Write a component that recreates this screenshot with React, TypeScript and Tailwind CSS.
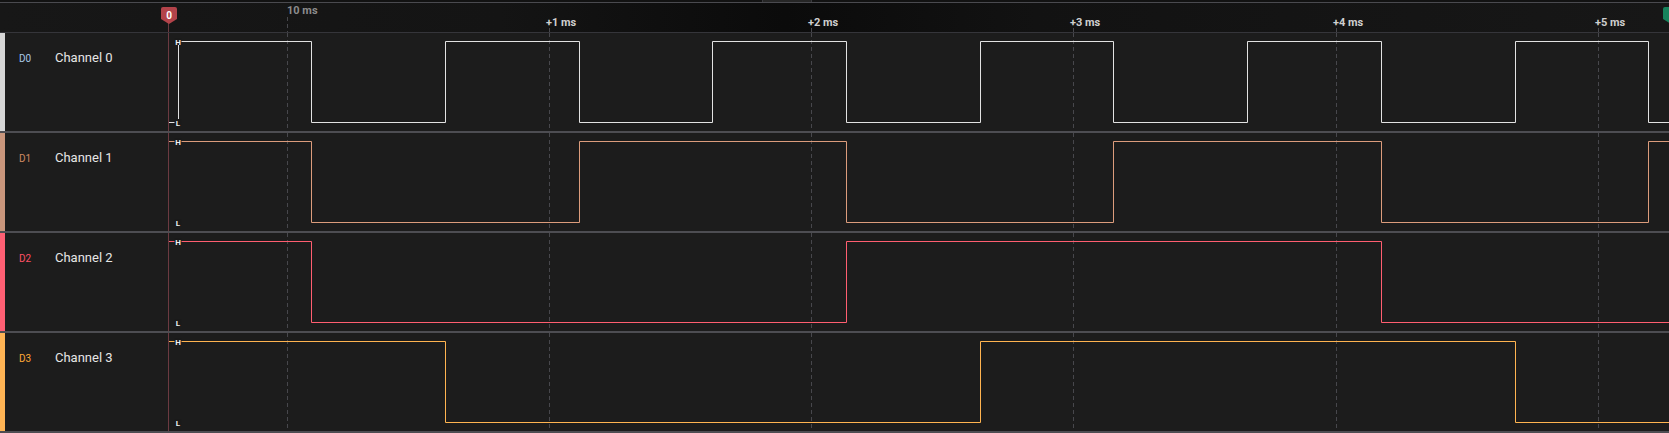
import React from "react";

const GRID = [287, 549, 811, 1073, 1336, 1598];
const PANEL = 168;
const W = 1669 - PANEL;
const H_Y = 8.5;
const L_Y = 89.5;

type Ch = {
  id: string;
  name: string;
  bar: string;
  label: string;
  wave: string;
  initHigh: boolean;
  trans: number[];
};

const range = (start: number, step: number, n: number) =>
  Array.from({ length: n }, (_, k) => start + k * step);

const CHANNELS: Ch[] = [
  {
    id: "D0",
    name: "Channel 0",
    bar: "bg-[#d6d6d6]",
    label: "text-[#a9c9e6]",
    wave: "#e2e2e2",
    initHigh: false,
    trans: range(177.5, 133.7, 12),
  },
  {
    id: "D1",
    name: "Channel 1",
    bar: "bg-[#c9967c]",
    label: "text-[#d08a62]",
    wave: "#dc9c7c",
    initHigh: true,
    trans: range(311.2, 267.4, 6),
  },
  {
    id: "D2",
    name: "Channel 2",
    bar: "bg-[#ff5f73]",
    label: "text-[#ff5064]",
    wave: "#ff5e70",
    initHigh: true,
    trans: [311.2, 846, 1380.8],
  },
  {
    id: "D3",
    name: "Channel 3",
    bar: "bg-[#ffb454]",
    label: "text-[#ffa836]",
    wave: "#ffb450",
    initHigh: true,
    trans: [444.9, 979.7, 1514.5],
  },
];

const sx = (page: number) => Math.round(page - PANEL) + 0.5;

function wavePath(initHigh: boolean, trans: number[]) {
  let high = initHigh;
  let d = `M 1 ${high ? H_Y : L_Y}`;
  for (const t of trans) {
    const x = sx(t);
    high = !high;
    d += ` H ${x} V ${high ? H_Y : L_Y}`;
  }
  d += ` H ${W}`;
  return d;
}

function LevelTag({ y, text }: { y: number; text: string }) {
  return (
    <g>
      <rect x={6.5} y={y - 3.5} width={7} height={7} fill="#1a1a1a" />
      <text
        x={10}
        y={y + 3}
        textAnchor="middle"
        fontSize="8"
        fontWeight="700"
        fill="#f2f2f2"
        fontFamily="Roboto, 'Liberation Sans', sans-serif"
      >
        {text}
      </text>
    </g>
  );
}

function Row({ ch }: { ch: Ch }) {
  return (
    <div className="flex h-[100px] border-b-2 border-[#4d4d52] bg-[#1c1c1c]">
      <div className="flex w-[168px] shrink-0">
        <div className={`w-[5px] shrink-0 ${ch.bar}`} />
        <div className="flex items-baseline pl-[14px] pt-[18px]">
          <span className={`w-[36px] text-[10px] leading-none ${ch.label}`}>{ch.id}</span>
          <span className="text-[13px] leading-none text-[#e6e6e6]">{ch.name}</span>
        </div>
      </div>
      <svg width={W} height={98} className="block shrink-0">
        {GRID.map((g) => (
          <line
            key={g}
            x1={sx(g)}
            x2={sx(g)}
            y1={0}
            y2={98}
            stroke="#47474c"
            strokeWidth={1}
            strokeDasharray="4 3"
          />
        ))}
        <line x1={0.5} x2={0.5} y1={0} y2={98} stroke="#6b3a41" strokeWidth={1} />
        <path d={wavePath(ch.initHigh, ch.trans)} fill="none" stroke={ch.wave} strokeWidth={1} />
        <LevelTag y={H_Y} text="H" />
        <LevelTag y={L_Y} text="L" />
      </svg>
    </div>
  );
}

function Marker({ color, text, left }: { color: string; text: string; left: number }) {
  return (
    <svg
      width={16}
      height={17}
      className="absolute top-[4px]"
      style={{ left }}
    >
      <path d="M 2 0 H 14 Q 16 0 16 2 V 12 L 8 17 L 0 12 V 2 Q 0 0 2 0 Z" fill={color} />
      {text && (
        <text
          x={8}
          y={11.5}
          textAnchor="middle"
          fontSize="10"
          fontWeight="700"
          fill="#ffffff"
          fontFamily="Roboto, 'Liberation Sans', sans-serif"
        >
          {text}
        </text>
      )}
    </svg>
  );
}

export default function App() {
  return (
    <div
      className="w-[1669px] h-[433px] overflow-hidden bg-[#1c1c1c]"
      style={{ fontFamily: "Roboto, 'Liberation Sans', sans-serif" }}
    >
      <div className="flex h-[2px] bg-[#121212]">
        <div className="w-[762px]" />
        <div className="w-[50px] border-x border-[#3a3a3e] bg-[#262626]" />
      </div>
      <div className="h-px bg-[#4a4a4f]" />
      <div className="relative h-[30px] border-b border-[#35353a] bg-[linear-gradient(90deg,#171717_0%,#141414_30%,#0b0b0b_47%,#121212_62%,#171717_100%)]">
        <svg width={1669} height={29} className="absolute left-0 top-0">
          <line x1={287.5} x2={287.5} y1={14} y2={29} stroke="#47474c" strokeDasharray="4 3" />
          {GRID.slice(1).map((g) => (
            <line
              key={g}
              x1={g + 0.5}
              x2={g + 0.5}
              y1={25}
              y2={29}
              stroke="#47474c"
              strokeDasharray="4 3"
            />
          ))}
          <line x1={168.5} x2={168.5} y1={18} y2={29} stroke="#6b3a41" />
        </svg>
        <span className="absolute left-[287px] top-[2px] text-[11px] font-bold leading-[12px] text-[#8c8c8c]">
          10 ms
        </span>
        {GRID.slice(1).map((g, i) => (
          <span
            key={g}
            className="absolute top-[14px] text-[11px] font-bold leading-[12px] text-[#cfcfcf]"
            style={{ left: g - 3 }}
          >
            +{i + 1} ms
          </span>
        ))}
        <Marker color="#b3434a" text="0" left={161} />
        <Marker color="#17835c" text="" left={1663} />
      </div>
      {CHANNELS.map((ch) => (
        <Row key={ch.id} ch={ch} />
      ))}
    </div>
  );
}
